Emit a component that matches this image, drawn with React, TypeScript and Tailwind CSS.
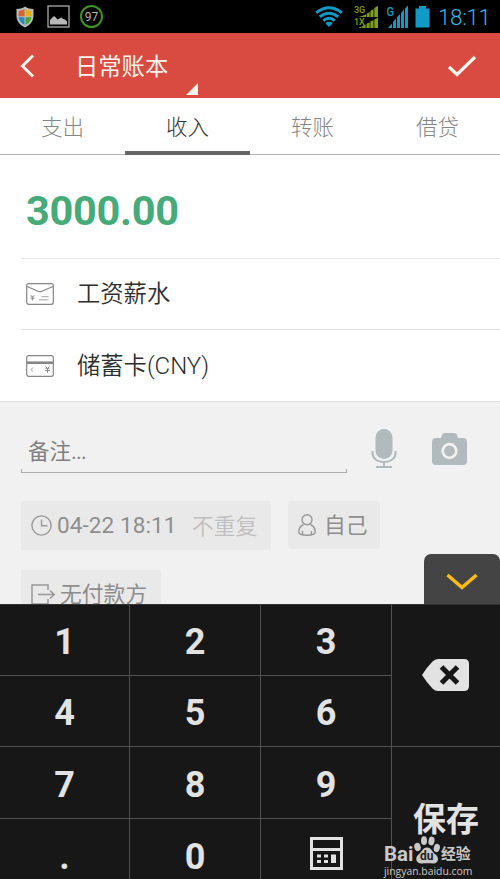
import React, { type FC, useState, JSX } from "react"
import clsx from "clsx"

const TABS = ["支出", "收入", "转账", "借贷"]

const KEYS = ["1", "2", "3", "4", "5", "6", "7", "8", "9", ".", "0", "calc"]

const ShieldIcon = (): JSX.Element => (
  <svg width="20" height="22" viewBox="0 0 20 22">
    <path d="M10 .5C12.500 2.300 15.500 3 18.500 3V10C18.500 15 15 19.300 10 21.500C5 19.300 1.500 15 1.500 10V3C4.500 3 7.500 2.300 10 .5Z" fill="#b9bcbc" />
    <path d="M9.500 3C7.800 4 5.800 4.700 3.500 4.900V10.300H9.500Z" fill="#d8622c" />
    <path d="M10.500 3C12.200 4 14.200 4.700 16.500 4.900V10.300H10.500Z" fill="#e0b414" />
    <path d="M3.500 11.300H9.500V19C6.200 17.300 3.800 14.600 3.500 11.300Z" fill="#2c8ac0" />
    <path d="M16.500 11.300H10.500V19C13.800 17.300 16.200 14.600 16.500 11.300Z" fill="#4aa52c" />
  </svg>
)

const PictureIcon = (): JSX.Element => (
  <svg width="23" height="23" viewBox="0 0 23 23">
    <rect x="1" y="1" width="21" height="21" fill="none" stroke="#a9a9a9" strokeWidth="1.300" />
    <path d="M3 19.500V15L7 11L8.800 12.600L10.500 14.500L14.500 12.500L16.200 14L18 14.500L20 16.500V19.500Z" fill="#b8b8b8" />
  </svg>
)

const WifiIcon = (): JSX.Element => (
  <svg width="28" height="21" viewBox="0 0 28 21" fill="none" stroke="#0f9bc8" strokeWidth="3">
    <path d="M1.200 6.700Q14 -3.200 26.800 6.700" />
    <path d="M4.800 10.800Q14 3.600 23.200 10.800" />
    <path d="M8.300 14.600Q14 10 19.700 14.600" />
    <path d="M14 21L10.300 17.200Q14 14.300 17.700 17.200Z" fill="#0f9bc8" stroke="none" />
  </svg>
)

const DualSignalIcon = (): JSX.Element => (
  <svg width="25" height="24" viewBox="0 0 25 24" fill="#7f9e14">
    <path d="M8 11L12 9.300V12H4ZM12.700 8.700L15.700 7V12H12.700ZM16.400 6L19.500 4V12H16.400ZM20.300 3L24 .7V12H20.300Z" />
    <path d="M4 23L7.500 21.500V23ZM8.200 21L11.700 19.500V23H8.200ZM12.500 18.700L15.700 17.200V23H12.500ZM16.400 16.500L19.500 15V23H16.400ZM20.300 14.500L24 12.700V23H20.300Z" />
    <text x="0" y="8" fontSize="9" fontWeight="500" fontFamily="Roboto, sans-serif">3G</text>
    <text x="0" y="19.500" fontSize="9" fontWeight="500" fontFamily="Roboto, sans-serif">1X</text>
  </svg>
)

const SignalIcon = (): JSX.Element => (
  <svg width="22" height="24" viewBox="0 0 22 24" fill="#0f9bc8">
    <path d="M1 23L5 18.500V23ZM6 17L9 13.500V23H6ZM10 12.200L13 9V23H10ZM14 8L17 4.500V23H14ZM18 3.500L21 .5V23H18Z" />
    <text x="-.5" y="11" fontSize="12.500" fontWeight="500" fontFamily="Roboto, sans-serif" textLength="7.500" lengthAdjust="spacingAndGlyphs">G</text>
  </svg>
)

const BatteryIcon = (): JSX.Element => (
  <svg width="15" height="22" viewBox="0 0 15 22">
    <path d="M4 0H11V2.500H14.500V21.500H.5V2.500H4Z" fill="#0f9bc8" />
  </svg>
)

const StatusBar = (): JSX.Element => (
  <div className="flex h-[33px] shrink-0 items-center bg-black pr-[10px] pl-[15px]">
    <ShieldIcon />
    <div className="ml-[12px]">
      <PictureIcon />
    </div>
    <div className="ml-[10px] flex size-[23px] items-center justify-center rounded-full border-2 border-[#3c9426] text-[12px] leading-none text-[#b4b4b4]">
      97
    </div>
    <div className="ml-auto flex items-center">
      <WifiIcon />
      <div className="ml-[11px]">
        <DualSignalIcon />
      </div>
      <div className="ml-[8px]">
        <SignalIcon />
      </div>
      <div className="ml-[6px]">
        <BatteryIcon />
      </div>
      <span className="ml-[8px] w-[52px] pt-px text-[22.500px] leading-none font-light tracking-[-0.4px] whitespace-nowrap text-[#33b5e5]">18:11</span>
    </div>
  </div>
)

const Header = (): JSX.Element => (
  <header className="flex h-[65px] shrink-0 items-center bg-[#d94b41] text-[#fff3ee]">
    <svg className="ml-[19px]" width="16" height="24" viewBox="0 0 16 24" fill="none" stroke="currentColor" strokeWidth="3">
      <path d="M14 1.500L3.500 12L14 22.500" />
    </svg>
    <div className="relative ml-[40px] flex h-full w-[123px] items-center">
      <h1 className="pt-[4px] text-[23.300px] leading-none">日常账本</h1>
      {/* Spinner corner under the book name */}
      <svg className="absolute right-0 bottom-[3px]" width="12" height="12" viewBox="0 0 12 12">
        <path d="M12 0V12H0Z" fill="currentColor" />
      </svg>
    </div>
    <svg className="mr-[23px] ml-auto" width="30" height="24" viewBox="0 0 30 24" fill="none" stroke="currentColor" strokeWidth="3.200">
      <path d="M2 13L10 20.500L28 3" />
    </svg>
  </header>
)

const Tabs = ({ active, onSelect }: { active: string; onSelect: (tab: string) => void }): JSX.Element => (
  <nav className="grid h-[57px] shrink-0 grid-cols-4 border-b border-[#b4b4b4]">
    {TABS.map((tab) => (
      <button
        key={tab}
        className={clsx(
          "-mb-px border-b-4 pt-[7px] text-[21.500px] leading-none font-light",
          active === tab ? "border-[#666] text-[#333]" : "border-transparent text-[#858585]"
        )}
        onClick={() => onSelect(tab)}
      >
        {tab}
      </button>
    ))}
  </nav>
)

const EnvelopeIcon = (): JSX.Element => (
  <svg width="28" height="22" viewBox="0 0 28 22" fill="none" stroke="#858585" strokeWidth="1.200">
    <rect x=".7" y=".7" width="26.600" height="20.600" rx="2" />
    <path d="M1.200 3.500L12 8.300Q14 9.200 16 8.300L26.800 3.500" />
    <path d="M4.500 12L6.500 14L8.500 12M4.500 14H8.500M4.500 15.700H8.500M6.500 14V17.500M15.500 13.700H22.500M13 16.800H22.500" strokeWidth=".8" />
  </svg>
)

const CardIcon = (): JSX.Element => (
  <svg width="28" height="22" viewBox="0 0 28 22" fill="none" stroke="#858585" strokeWidth="1.200">
    <rect x=".7" y=".7" width="26.600" height="20.600" rx="2" />
    <path d="M1 7.700H27" strokeWidth="2.600" />
    <path d="M7 12.500L5 14.500L7 16.500M19.500 11.500L21.500 13.500L23.500 11.500M19.500 13.700H23.500M19 15.500H24M21.500 13.500V18" strokeWidth=".9" />
  </svg>
)

const ClockIcon = (): JSX.Element => (
  <svg width="21" height="21" viewBox="0 0 21 21" fill="none" stroke="#999" strokeWidth="1.400">
    <circle cx="10.500" cy="10.500" r="9.600" />
    <path d="M10.500 4.500V10.700H16.500" />
  </svg>
)

const PersonIcon = (): JSX.Element => (
  <svg width="18" height="22" viewBox="0 0 18 22" fill="none" stroke="#999" strokeWidth="1.400">
    <circle cx="9" cy="5.800" r="5" />
    <path d="M5.500 10.500C2.500 12 .8 15 .8 18C.8 20.500 3.500 21.200 9 21.200S17.200 20.500 17.200 18C17.200 15 15.500 12 12.500 10.500M4.500 17V20.500M13.500 17V20.500" />
  </svg>
)

const ExitIcon = (): JSX.Element => (
  <svg width="25" height="21" viewBox="0 0 25 21" fill="none" stroke="#999" strokeWidth="1.500">
    <path d="M17 6V1H1V20H17V15M7 10.500H23M19 6.500L23.200 10.500L19 14.500" />
  </svg>
)

const MicIcon = (): JSX.Element => (
  <svg width="26" height="40" viewBox="0 0 26 40" fill="none" stroke="#b1babd" strokeWidth="2">
    <rect x="4.500" y="0" width="17" height="30" rx="8.500" fill="#b1babd" stroke="none" />
    <path d="M1.500 22V24C1.500 29.500 6 33 13 33S24.500 29.500 24.500 24V22M13 33V38M5 38H21" />
  </svg>
)

const CameraIcon = (): JSX.Element => (
  <svg width="35" height="32" viewBox="0 0 35 32">
    <path d="M4 5H9L10 2Q10.500 0 12.500 0H22.500Q24.500 0 25 2L26 5H31Q35 5 35 9V28Q35 32 31 32H4Q0 32 0 28V9Q0 5 4 5Z" fill="#b1babd" />
    <circle cx="17.500" cy="18" r="6.800" fill="#b1babd" stroke="#f1f1f1" strokeWidth="2.700" />
  </svg>
)

const EntryRow = ({ icon, label, suffix }: { icon: JSX.Element; label: string; suffix?: string }): JSX.Element => (
  <div className="ml-[21px] flex h-full items-center pl-[5px]">
    {icon}
    <span className="ml-[23px] pt-px text-[23.300px] leading-none font-[350] whitespace-nowrap text-[#2e2e2e]">
      {label}
      {suffix && <span className="text-[24px]">{suffix}</span>}
    </span>
  </div>
)

const NotePanel = (): JSX.Element => (
  <section className="relative h-[203px] shrink-0 overflow-hidden border-t border-[#dcdcdc] bg-[#f1f1f1] pt-[27px] pl-[21px]">
    <div className="flex h-[44px]">
      <div className="flex w-[326px] flex-col">
        <div className="flex h-[40px] items-center pt-[5px] pl-[7px] text-[21.500px] leading-none text-[#808080]">
          <span>备注</span>
          <span className="tracking-[-0.7px]">...</span>
        </div>
        <div className="h-[4px] border-x border-b border-[#adadad]" />
      </div>
      <div className="ml-[24px]">
        <MicIcon />
      </div>
      <div className="ml-[35px] pt-[4px]">
        <CameraIcon />
      </div>
    </div>
    <div className="mt-[28px] flex gap-[17px]">
      <div className="flex h-[49px] w-[250px] items-center rounded-[3px] bg-[#e9e9e9] pl-[10px] text-[#8e8e8e]">
        <ClockIcon />
        <span className="ml-[5px] w-[120px] text-[22.500px] leading-none tracking-[0.1px] whitespace-nowrap">04-22 18:11</span>
        <span className="ml-[15px] pt-[2px] text-[21.700px] leading-none font-[350] text-[#bebebe]">不重复</span>
      </div>
      <div className="flex h-[48px] w-[92px] items-center rounded-[3px] bg-[#e9e9e9] pl-[10px] text-[#8e8e8e]">
        <PersonIcon />
        <span className="ml-[8px] pt-[2px] text-[21.700px] leading-none">自己</span>
      </div>
    </div>
    <div className="mt-[20px] flex h-[48px] w-[140px] items-center rounded-[3px] bg-[#e9e9e9] pl-[10px] text-[#8e8e8e]">
      <ExitIcon />
      <span className="ml-[4px] pt-px text-[21.800px] leading-none whitespace-nowrap">无付款方</span>
    </div>
    <button className="absolute right-0 bottom-0 flex h-[50px] w-[76px] items-center justify-center rounded-t-[7px] bg-[#444]">
      <svg className="mt-[5px]" width="32" height="18" viewBox="0 0 32 18" fill="none" stroke="#fdbd10" strokeWidth="3.500">
        <path d="M1.500 2L16 14.500L30.500 2" />
      </svg>
    </button>
  </section>
)

const CalculatorIcon = (): JSX.Element => (
  <svg className="-mt-[7px]" width="33" height="33" viewBox="0 0 33 33">
    <path fillRule="evenodd" d="M0 0H33V33H0ZM3 3V11H30V3ZM3 14V30H30V14Z" fill="#e2e2e2" />
    <path d="M7 17.500H11V20.500H7ZM14 17.500H18V20.500H14ZM21 17.500H26V26H21ZM7 23H11V26H7ZM14 23H18V26H14Z" fill="#e2e2e2" />
  </svg>
)

const BackspaceIcon = (): JSX.Element => (
  <svg width="47" height="32" viewBox="0 0 47 32">
    <path d="M0 16Q5 8 10.500 2.500Q13 0 16 0H42Q47 0 47 5V27Q47 32 42 32H16Q13 32 10.500 29.500Q5 24 0 16Z" fill="#e2e2e2" />
    <path d="M19.500 8L35.500 24M35.500 8L19.500 24" stroke="#171717" strokeWidth="5" />
  </svg>
)

const Watermark = (): JSX.Element => (
  <div className="absolute bottom-0 left-[-8px] flex w-[100px] flex-col text-left text-[#c9c9c9]">
    <div className="flex h-[29px] items-end leading-none">
      <span className="w-[30px] text-[20.500px] leading-[20px] font-bold">Bai</span>
      <div className="relative h-[28px] w-[26px]">
        <svg width="26" height="28" viewBox="0 0 26 28" fill="#c9c9c9">
          <ellipse cx="3.500" cy="11" rx="3.200" ry="4.200" transform="rotate(-15 3.500 11)" />
          <ellipse cx="10" cy="4.700" rx="3" ry="4.400" />
          <ellipse cx="17.500" cy="5" rx="3" ry="4.400" transform="rotate(10 17.500 5)" />
          <ellipse cx="22.800" cy="12" rx="3" ry="4.200" transform="rotate(15 22.800 12)" />
          <path d="M13 11.500C17.500 11.500 18 16 21.500 18.500C26 22 24 28 19 27.500C15.500 27 11.500 27 8 27.500C2 28 .5 22 4.500 18.500C8 16 8.500 11.500 13 11.500Z" />
        </svg>
        <span className="absolute top-[14px] left-[6px] text-[12px] leading-none font-bold text-[#222]">du</span>
      </div>
      <span className="ml-px text-[14.800px] leading-[19px] font-bold">经验</span>
    </div>
    <span className="h-[15px] font-['Open_Sans',sans-serif] text-[10.400px] leading-[15px] whitespace-nowrap">jingyan.baidu.com</span>
  </div>
)

const Keypad = ({ onPress }: { onPress: (key: string) => void }): JSX.Element => (
  <div className="flex h-[275px] shrink-0 gap-px overflow-hidden border-t border-[#333] bg-[#505050]">
    <div className="grid h-[285px] w-[391px] shrink-0 grid-cols-[129px_130px_130px] grid-rows-[70px_70px_71px_71px] gap-px">
      {KEYS.map((key) => (
        <button
          key={key}
          className="flex items-center justify-center bg-[#171717] pt-[4px] text-[36px] leading-none font-bold text-[#e2e2e2]"
          onClick={() => onPress(key)}
        >
          {key === "calc" ? <CalculatorIcon /> : key}
        </button>
      ))}
    </div>
    <div className="flex w-[108px] flex-col gap-px">
      <button className="flex h-[141px] items-center justify-center bg-[#171717] pr-px pb-[2px]" onClick={() => onPress("back")}>
        <BackspaceIcon />
      </button>
      <div className="relative flex-1 bg-[#171717] pt-[56px] text-center">
        <button className="text-[33px] leading-none font-bold text-[#e2e2e2]">保存</button>
        <Watermark />
      </div>
    </div>
  </div>
)

const App: FC = () => {
  const [tab, setTab] = useState("收入")
  const [amount, setAmount] = useState("3000.00")

  const handlePress = (key: string): void => {
    if (key === "calc") return
    if (key === "back") {
      setAmount((prev) => prev.slice(0, -1))
      return
    }
    setAmount((prev) => prev + key)
  }

  return (
    <div className="flex h-[879px] w-[500px] flex-col overflow-hidden bg-white font-[Roboto,'Noto_Sans_CJK_SC',sans-serif]">
      <StatusBar />
      <Header />
      <Tabs active={tab} onSelect={setTab} />
      <div className="flex h-[103px] shrink-0 items-center pt-[8px] pl-[26px] text-[41.500px] leading-none font-bold tracking-[-0.3px] text-[#46aa79]">
        {amount}
      </div>
      <div className="ml-[21px] h-px shrink-0 bg-[#e6e6e6]" />
      <div className="h-[70px] shrink-0">
        <EntryRow icon={<EnvelopeIcon />} label="工资薪水" />
      </div>
      <div className="ml-[21px] h-px shrink-0 bg-[#dedede]" />
      <div className="h-[71px] shrink-0">
        <EntryRow icon={<CardIcon />} label="储蓄卡" suffix="(CNY)" />
      </div>
      <NotePanel />
      <Keypad onPress={handlePress} />
    </div>
  )
}

export default App
